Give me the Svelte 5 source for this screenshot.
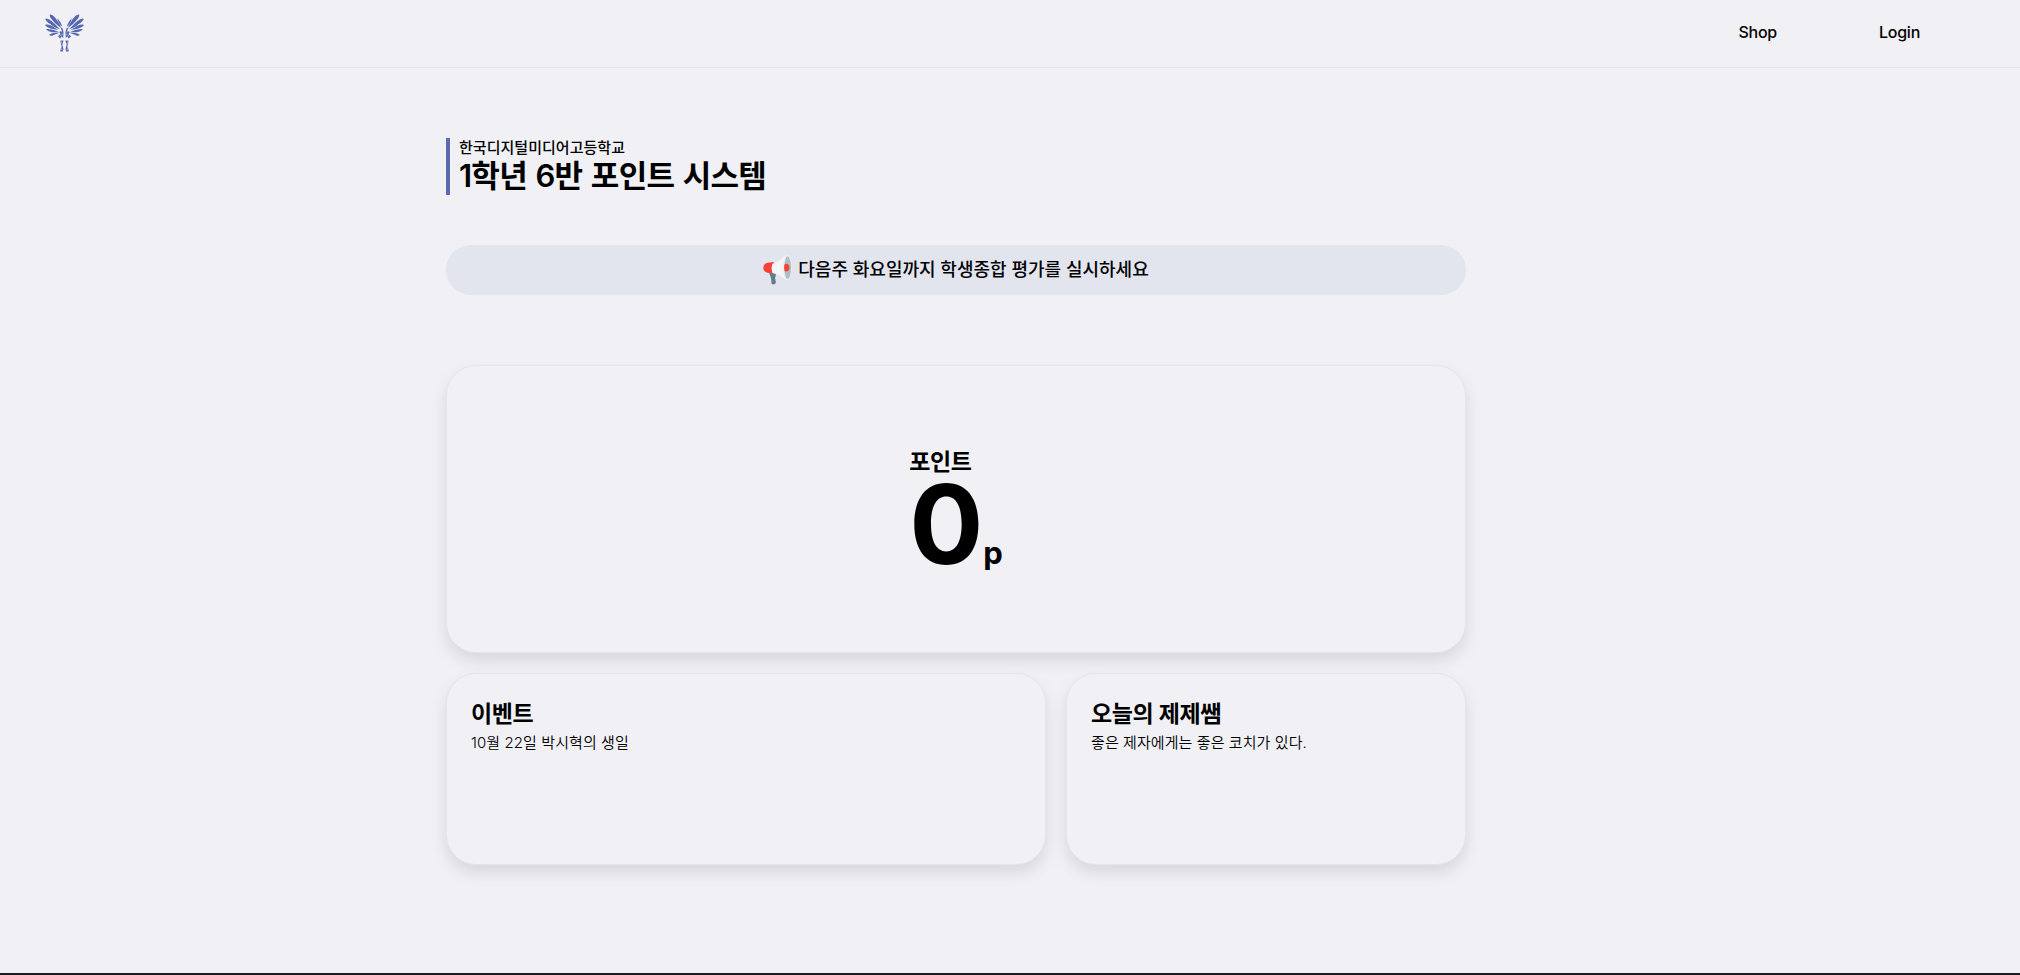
<script>
  const links = ['Shop', 'Login'];
  const cards = [
    { title: '이벤트', text: '10월 22일 박시혁의 생일' },
    { title: '오늘의 제제쌤', text: '좋은 제자에게는 좋은 코치가 있다.' }
  ];
</script>

<div class="page">
  <header>
    <svg class="logo" viewBox="45 42 118 114" aria-label="logo">
      {#each ['', 'translate(208 0) scale(-1 1)'] as flip}
        <g transform={flip} fill="#5568b0">
          <path d="M60 43 C67 42 77 53 82 61 C87 68 91 75 94 83 C86 79 77 71 71 64 C64 57 57 48 60 43Z" />
          <path d="M47 55 C55 54 66 63 74 71 C80 77 86 83 90 88 C79 85 69 79 61 72 C53 66 45 61 47 55Z" />
          <path d="M46 74 C56 72 65 77 73 82 L85 89 C74 89 63 86 56 83 C50 80 45 78 46 74Z" />
          <path d="M49 87 C58 86 69 89 77 92 L87 96 C78 98 68 97 61 95 C55 93 49 91 49 87Z" />
          <path d="M58 104 C66 98 76 98 88 98 C82 102 76 102 71 105 C66 109 59 108 58 104Z" />
          <path d="M82 54 C88 60 95 69 97 80 C91 76 84 66 82 54Z" />
          <path d="M92 82 L98 85 L101 96 L100 115 L96 109 L91 116 L84 109 L92 102 L88 96 L96 92Z" />
          <path d="M92 122 L101 122 L98 135 L101 149 L98 156 L91 154 L94 141Z" />
        </g>
        <g transform={flip} fill="none" stroke="#f0f0f5" stroke-width="1.5">
          <path d="M91 90 L98 97 M90 108 L99 102 M95 125 L97 132 L93 147 L99 151" />
        </g>
      {/each}
    </svg>
    <nav>
      {#each links as link}<a href="#top">{link}</a>{/each}
    </nav>
  </header>

  <main>
    <div class="heading">
      <p>한국디지털미디어고등학교</p>
      <h1>1학년 6반 포인트 시스템</h1>
    </div>

    <div class="notice">
      <svg class="horn" viewBox="0 0 87 90" aria-hidden="true">
        <path d="M17 49 L36 54 Q41 60 36 68 L39 83 Q34 91 26 87 L24 70Z" fill="#607d8b" />
        <path d="M32 21 C12 22 1 25 1 39 C1 51 13 55 32 55Z" fill="#f44336" />
        <path d="M28 27 C44 21 57 12 70 0 L70 75 C57 64 44 57 28 54 Q23 40 28 27Z" fill="#f5f5f5" />
        <ellipse cx="73" cy="38" rx="13" ry="38" fill="#eceff1" />
        <ellipse cx="74" cy="38" rx="10" ry="34" fill="#b0bec5" />
        <path d="M65 27 C74 25 79 30 79 38 C79 46 74 51 65 49 Q62 38 65 27Z" fill="#f44336" />
      </svg>
      <span>다음주 화요일까지 학생종합 평가를 실시하세요</span>
    </div>

    <section class="card points">
      <div>
        <h2>포인트</h2>
        <div class="value"><strong>0</strong><span>p</span></div>
      </div>
    </section>

    <div class="row">
      {#each cards as card}
        <section class="card info">
          <h2>{card.title}</h2>
          <p>{card.text}</p>
        </section>
      {/each}
    </div>
  </main>
  <footer></footer>
</div>

<style>
  :global(body) { margin: 0; background: #f0f0f5; overflow: hidden; }
  .page {
    height: 975px;
    display: flex;
    flex-direction: column;
    box-sizing: border-box;
    background: #f0f0f5;
    color: #000;
    font-family: Inter, 'Noto Sans CJK KR', sans-serif;
  }
  h1, h2, p { margin: 0; white-space: nowrap; }
  header {
    height: 67px;
    flex: none;
    border-bottom: 1px solid #e3e3e9;
    display: flex;
    justify-content: space-between;
    padding: 0 100px 0 45px;
  }
  .logo { width: 39px; height: 38px; margin-top: 14px; }
  nav { display: flex; gap: 102px; padding-top: 22px; }
  nav a {
    color: #000;
    text-decoration: none;
    font-size: 16px;
    line-height: 20px;
    font-weight: 500;
    letter-spacing: -0.25px;
  }
  main { width: 1020px; margin-left: 446px; padding-top: 70px; flex: 1; }
  .heading {
    height: 57px;
    box-sizing: border-box;
    border-left: 4px solid #5b6bb0;
    padding-left: 9px;
  }
  .heading p { font-size: 15px; line-height: 19px; font-weight: 500; letter-spacing: 0.03px; }
  h1 { font-size: 31px; line-height: 37px; font-weight: 600; letter-spacing: -0.75px; word-spacing: 1.5px; }
  .notice {
    margin-top: 50px;
    height: 50px;
    border-radius: 25px;
    background: #e2e5ee;
    display: flex;
    align-items: center;
    justify-content: center;
    gap: 6px;
    font-size: 18px;
    font-weight: 500;
    white-space: nowrap;
  }
  .notice span { line-height: 24px; }
  .horn { width: 29px; height: 30px; }
  .card {
    box-sizing: border-box;
    background: #f0f0f5;
    border: 1px solid #e4e5ee;
    border-radius: 30px;
    box-shadow: 0 8px 16px rgba(0, 0, 0, 0.1);
  }
  .points {
    height: 288px;
    margin-top: 70px;
    display: flex;
    justify-content: center;
    padding-top: 81px;
  }
  h2 { font-size: 23px; line-height: 30px; font-weight: 600; letter-spacing: -0.4px; }
  .value { display: flex; align-items: baseline; line-height: 94px; }
  .value strong { font-size: 110px; font-weight: 700; }
  .value span { font-size: 31px; font-weight: 700; }
  .row { display: grid; grid-template-columns: 600px 400px; gap: 20px; margin-top: 20px; }
  .info { height: 192px; padding: 25px 24px; }
  .info p { font-size: 15px; line-height: 27px; font-weight: 350; letter-spacing: 0.08px; }
  footer { height: 2px; background: #1b1b1e; flex: none; }
</style>
